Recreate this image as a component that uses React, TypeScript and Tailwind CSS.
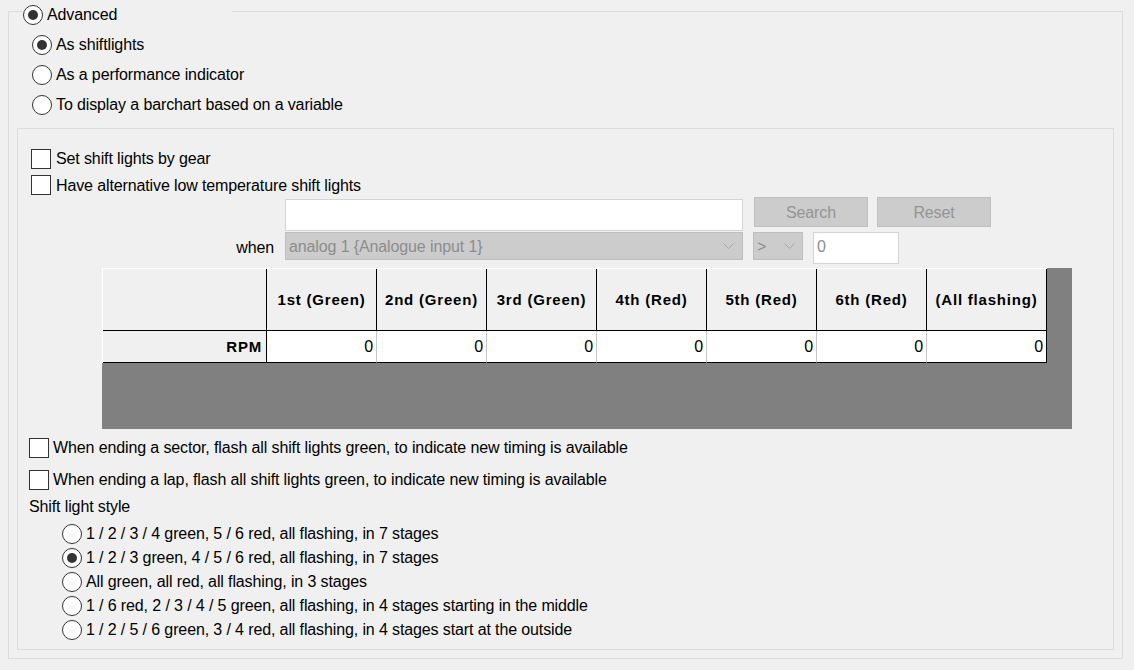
import React from "react";

function Radio({ checked = false }: { checked?: boolean }) {
  return (
    <span className="flex h-[20px] w-[20px] shrink-0 items-center justify-center rounded-full border border-[#333333] bg-white">
      {checked && <span className="h-[10px] w-[10px] rounded-full bg-[#333333]" />}
    </span>
  );
}

function Check() {
  return <span className="h-[20px] w-[20px] shrink-0 border border-[#333333] bg-white" />;
}

function Chevron() {
  return (
    <svg width="11" height="6" viewBox="0 0 11 6" className="shrink-0">
      <path d="M0.5 0.5 L5.5 5.5 L10.5 0.5" fill="none" stroke="#a6a6a6" strokeWidth="1" />
    </svg>
  );
}

const headers = [
  "1st (Green)",
  "2nd (Green)",
  "3rd (Green)",
  "4th (Red)",
  "5th (Red)",
  "6th (Red)",
  "(All flashing)",
];

const styles = [
  { label: "1 / 2 / 3 / 4 green, 5 / 6 red, all flashing, in 7 stages", checked: false },
  { label: "1 / 2 / 3 green, 4 / 5 / 6 red, all flashing, in 7 stages", checked: true },
  { label: "All green, all red, all flashing, in 3 stages", checked: false },
  { label: "1 / 6 red, 2 / 3 / 4 / 5 green, all flashing, in 4 stages starting in the middle", checked: false },
  { label: "1 / 2 / 5 / 6 green, 3 / 4 red, all flashing, in 4 stages start at the outside", checked: false },
];

export default function App() {
  return (
    <div className="h-[670px] w-[1134px] overflow-hidden bg-[#f0f0f0] pl-[8px] pt-[11px] font-['Liberation_Sans',Arial,sans-serif] text-[16px] leading-none tracking-[-0.12px] text-black">
      {/* Advanced group */}
      <div className="relative h-[648px] w-[1115px] border border-[#dcdcdc]">
        <div className="absolute left-[13px] top-[-7px] flex h-[20px] w-[210px] items-center gap-[4px] bg-[#f0f0f0] pl-[1px]">
          <Radio checked />
          <span>Advanced</span>
        </div>

        <div className="flex flex-col pl-[23px] pt-[18px]">
          <label className="flex h-[30px] items-center gap-[4px]">
            <Radio checked />
            <span>As shiftlights</span>
          </label>
          <label className="flex h-[30px] items-center gap-[4px]">
            <Radio />
            <span>As a performance indicator</span>
          </label>
          <label className="flex h-[30px] items-center gap-[4px]">
            <Radio />
            <span>To display a barchart based on a variable</span>
          </label>
        </div>

        {/* Shift lights panel */}
        <div className="ml-[8px] mt-[8px] h-[522px] w-[1097px] border border-[#dcdcdc] pt-[16px]">
          <div className="flex flex-col pl-[13px]">
            <label className="flex h-[27px] items-center gap-[5px]">
              <Check />
              <span>Set shift lights by gear</span>
            </label>
            <label className="flex h-[25px] items-start gap-[5px] pt-[3px]">
              <Check />
              <span className="pt-[3px]">Have alternative low temperature shift lights</span>
            </label>
          </div>

          {/* search */}
          <div className="flex items-start pl-[267px]">
            <div className="mt-[2px] h-[32px] w-[458px] border border-[#d4d4d4] bg-white" />
            <button className="ml-[11px] h-[30px] w-[114px] border border-[#bfbfbf] bg-[#cccccc] pt-[2px] text-[#949494]">
              Search
            </button>
            <button className="ml-[9px] h-[30px] w-[114px] border border-[#bfbfbf] bg-[#cccccc] pt-[2px] text-[#949494]">
              Reset
            </button>
          </div>

          {/* condition */}
          <div className="mt-[1px] flex items-start">
            <span className="flex h-[28px] w-[257px] items-center justify-end pr-[1px] pt-[4px]">when</span>
            <div className="ml-[10px] flex h-[28px] w-[458px] items-center justify-between border border-[#bdbdbd] bg-[#cccccc] pl-[3px] pr-[8px] text-[#8c8c8c]">
              <span className="pt-[2px]">analog 1 {"{Analogue input 1}"}</span>
              <Chevron />
            </div>
            <div className="ml-[10px] flex h-[28px] w-[50px] items-center justify-between border border-[#bdbdbd] bg-[#cccccc] pl-[3px] pr-[7px] text-[#8c8c8c]">
              <span className="pt-[2px]">&gt;</span>
              <Chevron />
            </div>
            <div className="ml-[10px] h-[32px] w-[86px] border border-[#d4d4d4] bg-white pl-[3px] pt-[6px] text-[#8c8c8c]">
              0
            </div>
          </div>

          {/* grid */}
          <div className="ml-[84px] mt-[4px] h-[161px] w-[970px] bg-[#808080]">
            <div className="w-[945px] border-l border-t border-white">
              <div className="grid grid-cols-[164px_110px_110px_110px_110px_110px_110px_120px]">
                <div className="h-[62px] border-b border-r border-black bg-[#f0f0f0]" />
                {headers.map((h) => (
                  <div
                    key={h}
                    className="flex h-[62px] items-center justify-center border-b border-r border-black bg-[#f0f0f0] text-[15px] font-bold tracking-[0.8px]"
                  >
                    {h}
                  </div>
                ))}
                <div className="flex h-[32px] items-center justify-end border-b border-r border-black bg-[#f0f0f0] pr-[4px] text-[15px] font-bold tracking-[0.8px]">
                  RPM
                </div>
                {headers.map((h, i) => (
                  <div
                    key={h}
                    className={
                      i === headers.length - 1
                        ? "flex h-[32px] items-center justify-end border-b border-r border-b-black border-r-black bg-white pr-[3px]"
                        : "flex h-[32px] items-center justify-end border-b border-r border-b-black border-r-[#c8c8c8] bg-white pr-[3px]"
                    }
                  >
                    0
                  </div>
                ))}
              </div>
            </div>
          </div>

          <div className="flex flex-col pl-[11px]">
            <label className="mt-[9px] flex h-[20px] items-center gap-[4px]">
              <Check />
              <span>When ending a sector, flash all shift lights green, to indicate new timing is available</span>
            </label>
            <label className="mt-[12px] flex h-[20px] items-center gap-[4px]">
              <Check />
              <span>When ending a lap, flash all shift lights green, to indicate new timing is available</span>
            </label>
            <span className="mt-[9px] flex h-[16px] items-center">Shift light style</span>
          </div>

          <div className="mt-[7px] flex flex-col pl-[44px]">
            {styles.map((s) => (
              <label key={s.label} className="flex h-[24px] items-center gap-[4px]">
                <Radio checked={s.checked} />
                <span>{s.label}</span>
              </label>
            ))}
          </div>
        </div>
      </div>
    </div>
  );
}
